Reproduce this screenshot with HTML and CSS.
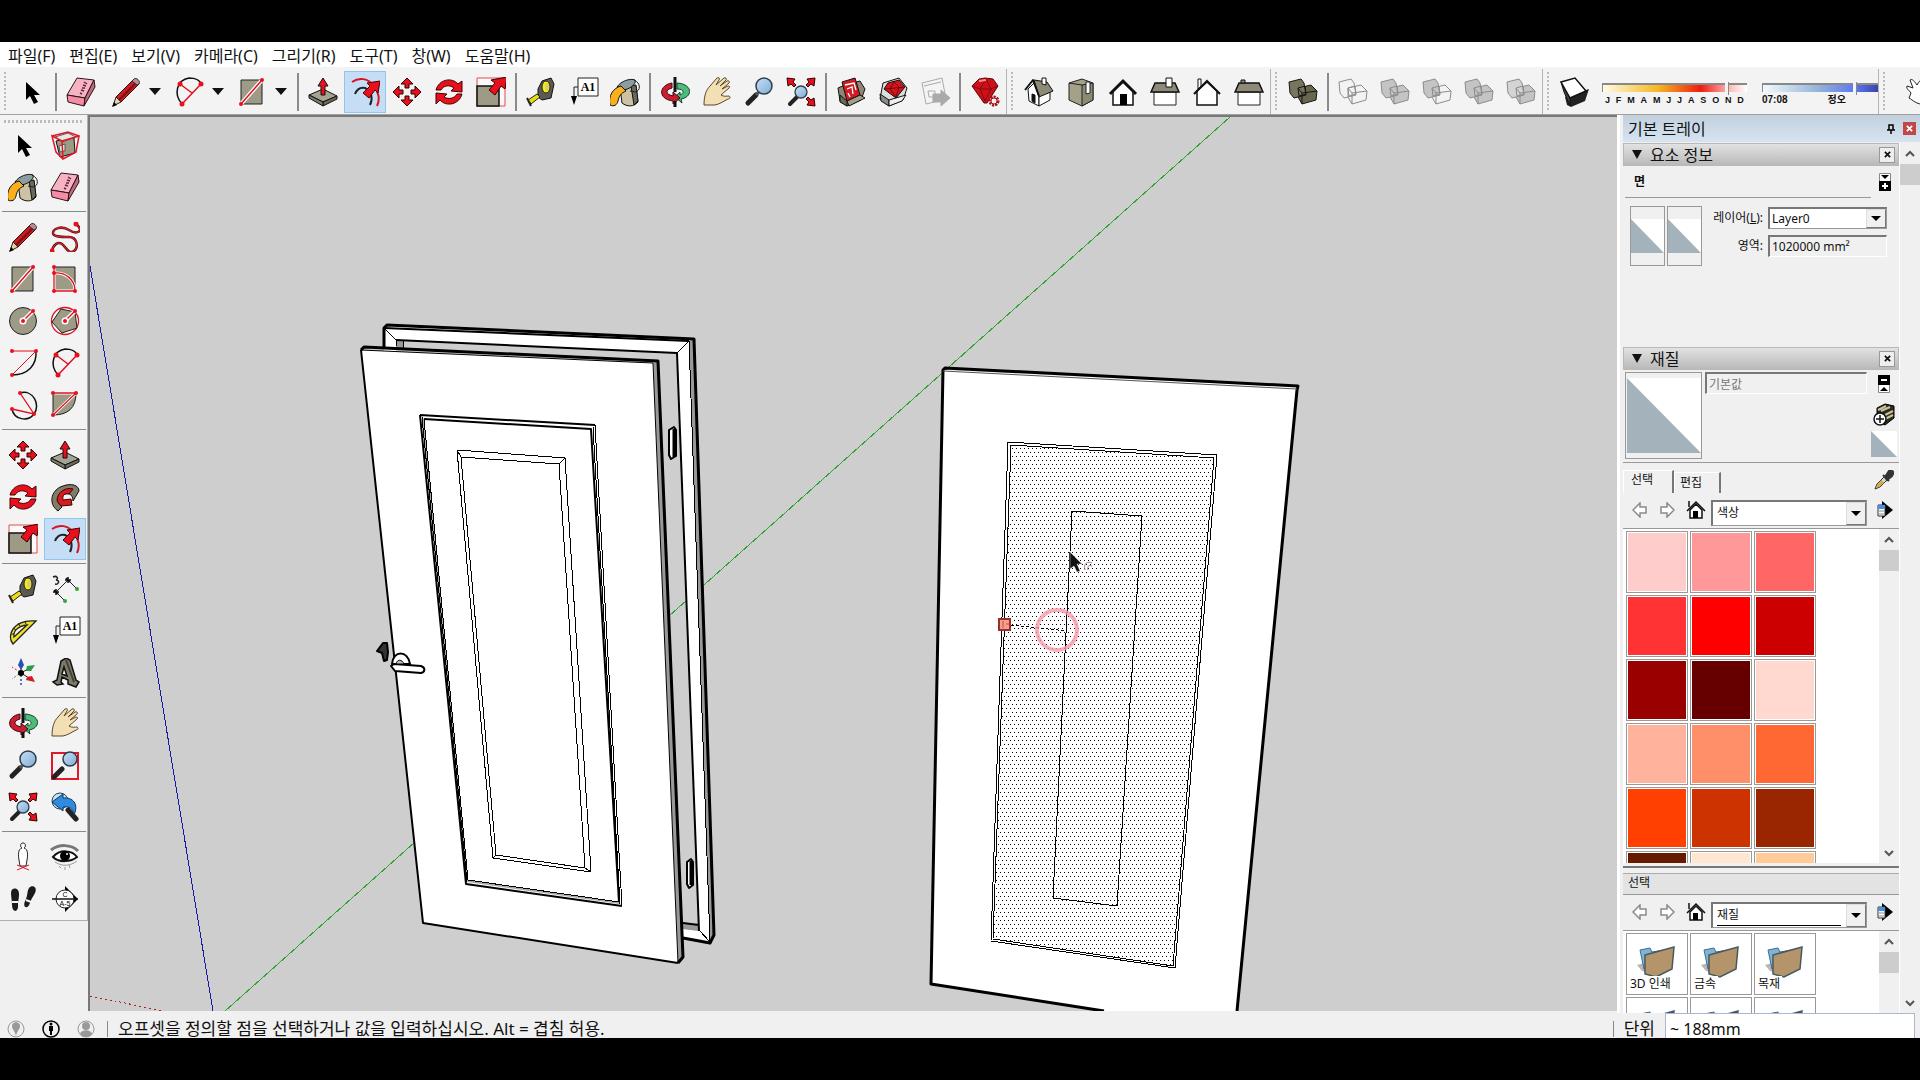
FILE: index.html
```html
<!DOCTYPE html>
<html lang="ko">
<head>
<meta charset="utf-8">
<title>모델링</title>
<link rel="stylesheet" href="styles.css">
</head>
<body>
<svg class="sprite" aria-hidden="true">
  <defs>
    <linearGradient id="lens" x1="0" y1="0" x2="1" y2="1"><stop offset="0" stop-color="#c9e0f5"/><stop offset="1" stop-color="#7fabd6"/></linearGradient>
    <pattern id="dots" width="4" height="8" patternUnits="userSpaceOnUse"><rect width="1" height="1" fill="#001"/><rect x="2" y="4" width="1" height="1" fill="#001"/></pattern>
  </defs>
  <symbol id="arrow" viewBox="-15 -15 30 30"><path d="M-5-10V8l4-4 4 8 4-2-4-7h6z"/></symbol>
  <symbol id="eraser" viewBox="-15 -15 30 30"><g stroke="#2b1418" stroke-width="1" stroke-linejoin="round"><path fill="#f7b3c4" d="M-4-14 13-12 4 6-14 3z"/><path fill="#f58da6" d="M-14 3 4 6 3 14-13 10z"/><path fill="#c26a80" d="M4 6 13-12 14-5 3 14z"/></g><path d="M3-10 6-8M2-7 5-6M1-4 4-4M0-2 3-1M-1 1 1 2" stroke="#5b2a36" stroke-width="1.500" fill="none"/></symbol>
  <symbol id="pencil" viewBox="-15 -15 30 30"><path fill="#c61c22" stroke="#3a0a0c" d="M-10 5 8-13l5 5L-5 10z"/><path stroke="#7d1014" stroke-width="2" d="M-7 8 11-10"/><path fill="#e9d2a6" stroke="#222" d="M-10 5-13 14-5 10z"/><path d="M-14 15l2-5 3 3z"/><path fill="#b98b92" stroke="#333" d="M8-13c2-2 7 2 5 5l-2 1-5-4z"/></symbol>
  <symbol id="arc2" viewBox="-15 -15 30 30"><path d="M-7 12C-16 2-12-12 0-14 8-14 11-11 12-8" fill="none" stroke="#111" stroke-width="1.500"/><path d="M-7 12 12-8M-9-8 3 1" stroke="#e01020" stroke-width="1.500"/><g fill="#e8101c"><circle cx="-7" cy="12" r="2.500"/><circle cx="12" cy="-8" r="2.500"/><circle cx="-9" cy="-8" r="2.500"/></g></symbol>
  <symbol id="rect" viewBox="-15 -15 30 30"><path fill="#9d9a86" stroke="#222" d="M-11-12H10V12H-11z"/><path d="M-11 12 10-12" stroke="#fff" stroke-width="4"/><path d="M-11 12 10-12" stroke="#e01020" stroke-width="1.500"/><circle cx="-11" cy="12" r="2" fill="#e8101c"/><circle cx="10" cy="-12" r="2" fill="#e8101c"/></symbol>
  <symbol id="rotrect" viewBox="-15 -15 30 30"><path fill="#9d9a86" stroke="#222" d="M-11-12H10V12H-11z"/><path d="M-11-12V12H10C10 0 0-7-11-6" fill="none" stroke="#fff" stroke-width="3"/><path d="M-11-12V12H10C10 0 0-7-11-6" fill="none" stroke="#e01020" stroke-width="1.300"/><g fill="#e8101c"><circle cx="-11" cy="-12" r="2"/><circle cx="-11" cy="-6" r="2"/><circle cx="-11" cy="12" r="2"/><circle cx="10" cy="12" r="2"/></g></symbol>
  <symbol id="circle" viewBox="-15 -15 30 30"><circle r="13.500" fill="#9d9a86" stroke="#222"/><path d="M0 0 10-10" stroke="#fff" stroke-width="4"/><path d="M0 0 10-10" stroke="#e01020" stroke-width="1.500"/><circle r="3.500" fill="#fff"/><circle r="2" fill="#e8101c"/><circle cx="10" cy="-10" r="2" fill="#e8101c"/></symbol>
  <symbol id="polygon" viewBox="-15 -15 30 30"><circle r="13.500" fill="#fff" stroke="#e01020" stroke-width="1.300"/><path fill="#9d9a86" stroke="#222" d="M-4-12 10-9 12 7-3 12-13 1z"/><path d="M0 0 10-10" stroke="#fff" stroke-width="4"/><path d="M0 0 10-10" stroke="#e01020" stroke-width="1.500"/><circle r="3.500" fill="#fff"/><circle r="2" fill="#e8101c"/><circle cx="10" cy="-10" r="2" fill="#e8101c"/></symbol>
  <symbol id="freehand" viewBox="-15 -15 30 30"><path d="M11-13C20-6 12-2 4-7S-12-8-12-4-4 0 4 0s10 10 5 14S1 10-3 7s-9 1-10 7" fill="none" stroke="#6f0c12" stroke-width="2.500"/><path d="M11-13C20-6 12-2 4-7S-12-8-12-4-4 0 4 0s10 10 5 14S1 10-3 7s-9 1-10 7" fill="none" stroke="#e03038" stroke-width="1"/><circle cx="11" cy="-13" r="2.500" fill="#e8101c"/><circle cx="-13" cy="14" r="2.500" fill="#e8101c"/></symbol>
  <symbol id="arc1" viewBox="-15 -15 30 30"><path d="M13-12C14 2 5 12-11 12" fill="none" stroke="#111" stroke-width="1.500"/><path d="M-11-12H13L-11 12" fill="none" stroke="#e01020"/><g fill="#e8101c"><circle cx="-11" cy="-12" r="2"/><circle cx="13" cy="-12" r="2"/><circle cx="-11" cy="12" r="2"/></g></symbol>
  <symbol id="arc3" viewBox="-15 -15 30 30"><path d="M-3-12C10-16 18 0 11 9 5 17-9 15-11 4" fill="none" stroke="#111" stroke-width="1.500"/><path d="M-3-12 11 9-11 4" fill="none" stroke="#e01020" stroke-width="1.300"/><g fill="#e8101c"><circle cx="-3" cy="-12" r="2"/><circle cx="11" cy="9" r="2"/><circle cx="-11" cy="4" r="2"/></g></symbol>
  <symbol id="pie" viewBox="-15 -15 30 30"><path fill="#9d9a86" stroke="#222" d="M-12-12H11C11 3 3 10-12 10z"/><path d="M-12-12H11L-12 10" fill="none" stroke="#fff" stroke-width="3"/><path d="M-12-12H11L-12 10" fill="none" stroke="#e01020" stroke-width="1.300"/><g fill="#e8101c"><circle cx="-12" cy="-12" r="2"/><circle cx="11" cy="-12" r="2"/><circle cx="-12" cy="10" r="2"/></g></symbol>
  <symbol id="pushpull" viewBox="-15 -15 30 30"><g stroke="#111" stroke-linejoin="round"><path fill="#a5a391" d="M0-3 14 4 0 10-14 3z"/><path fill="#6d6b5c" d="M14 4V7L0 14V10z"/><path fill="#7d7b6a" d="M-14 3V6L0 14V10z"/><path fill="#e8101c" d="M0-14 5-6H2V3H-2V-6H-5z"/></g></symbol>
  <symbol id="offset" viewBox="-15 -15 30 30"><path d="M-13-10C-6-15 3-14 9-6 14 0 15 8 12 14" fill="none" stroke="#d81420" stroke-width="2"/><path d="M-10 2C-8-3-5-5 0-4 7-1 8 7 5 13" fill="none" stroke="#222" stroke-width="2"/><path fill="#e8101c" stroke="#400" d="M15-11 13 1 10-2 4 6-2 1 5-6 2-9z"/></symbol>
  <symbol id="move" viewBox="-15 -15 30 30"><g fill="#e8101c" stroke="#300"><path d="M0-14 6-8H2V-4H-2V-8H-6z"/><path d="M0 14 6 8H2V4H-2V8H-6z"/><path d="M14 0 8-6V-2H4V2H8V6z"/><path d="M-14 0-8-6V-2H-4V2H-8V6z"/></g></symbol>
  <symbol id="rotate" viewBox="-15 -15 30 30"><g fill="#e8101c" stroke="#400"><path d="M-13-2C-10-13 3-15 9-8L13-11V0L2-1 5-4C0-8-6-6-8-2z"/><path d="M13 2C10 13-3 15-9 8L-13 12V1L-2 2-5 5C0 8 6 6 8 2z"/></g></symbol>
  <symbol id="scale" viewBox="-15 -15 30 30"><path d="M-14-14H14V14H-14z" fill="#fff8f8" stroke="#e04a54"/><path d="M-14-6H8V14H-14z" fill="#9d9a86" stroke="#111" stroke-width="1.500"/><path fill="#e8101c" stroke="#300" d="M16-15 14-3 10-6 4 3-2-2 4-9 0-12z"/></symbol>
  <symbol id="tape" viewBox="-15 -15 30 30"><path fill="#5c5a4e" stroke="#111" d="M-3-3 1-11 10-14 13-8 10 6 1 8-3 5z"/><ellipse cx="5" cy="-5" rx="4" ry="6" fill="#f5ea20" stroke="#222"/><ellipse cx="6" cy="-5" rx="2" ry="4" fill="#d9cf60"/><path fill="#e8dc10" stroke="#222" d="M-13 8-4 2-1 5-10 12z"/><path d="M-14 6-10 14" stroke="#222" stroke-width="2"/></symbol>
  <symbol id="bucket" viewBox="-15 -15 30 30"><g stroke="#111"><path fill="#cdc3a4" d="M-5-5 11-6 13 10C9 15 2 15-3 11z"/><path fill="#6b695c" d="M6-6 11-7 13 9 9 13z"/><path fill="#8b9da0" d="M-8-5C-4-11 5-14 10-12 12-8 4-2-3-2z"/><path fill="#f9b01c" d="M-4-6C-12-4-17 4-15 13-11 15-8 13-7 9-6 4-4 1 1-1z"/></g><path d="M9-12C16-9 16-1 10 0L5-1" fill="none" stroke="#222"/></symbol>
  <symbol id="orbit" viewBox="-15 -15 30 30"><path fill="#4dbb7c" stroke="#12462a" d="M2-9C18-8 18 5 6 7L7 11 0 5 5 0V3C10 1 9-3 2-3z"/><path fill="#c81e30" stroke="#3f0910" d="M-3-9C-16-7-18 7-2 9V12L5 6-2 0V4C-10 2-10-2-3-4z"/><path d="M0-15V0M0 9V15" stroke="#111" stroke-width="3"/></symbol>
  <symbol id="hand" viewBox="-15 -15 30 30"><path fill="#f3dfb4" stroke="#5a4626" stroke-linejoin="round" d="M-13 13C-13 4-11-2-7-6L0-14C2-15 3-14 2-12L-1-7 7-14C9-15 10-13 9-12L3-6 10-11C12-12 13-10 12-9L5-3 11-6C13-6 13-5 12-4L4 3C7 5 10 4 12 4 14 5 13 7 11 7 7 9 3 12-2 13z"/></symbol>
  <symbol id="zoom" viewBox="-15 -15 30 30"><path d="M-11 11-3 3" stroke="#222" stroke-width="5" stroke-linecap="round"/><path d="M-3 3 0 0" stroke="#555" stroke-width="3"/><circle cx="5" cy="-6" r="8" fill="url(#lens)" stroke="#2f3e4d" stroke-width="1.500"/></symbol>
  <symbol id="zoomwin" viewBox="-15 -15 30 30"><path d="M-13-12H13V14H-13z" fill="none" stroke="#e01828" stroke-width="2"/><path d="M-11 12-3 4" stroke="#222" stroke-width="5" stroke-linecap="round"/><circle cx="5" cy="-6" r="7" fill="url(#lens)" stroke="#2f3e4d" stroke-width="1.500"/></symbol>
  <symbol id="extents" viewBox="-15 -15 30 30"><path d="M-11 12-4 5" stroke="#222" stroke-width="4" stroke-linecap="round"/><circle cx="0" cy="0" r="6" fill="url(#lens)" stroke="#2f3e4d" stroke-width="1.300"/><g fill="#e8101c" stroke="#300"><path d="M-14-14-6-13-8-10-5-7-7-5-10-8-13-6z"/><path d="M14-14 6-13 8-10 5-7 7-5 10-8 13-6z"/><path d="M14 14 6 13 8 10 5 7 7 5 10 8 13 6z"/></g></symbol>
  <symbol id="previous" viewBox="-15 -15 30 30"><circle cx="-5" cy="-6" r="8" fill="#c7e0f2" stroke="#345"/><path d="M3 3 11 12" stroke="#222" stroke-width="5" stroke-linecap="round"/><path fill="#2f8be0" stroke="#0d3560" d="M-13-5-2-13V-9C8-10 14-3 9 8 8 1 4-1-2 0V4z"/></symbol>
  <symbol id="get3d" viewBox="-15 -15 30 30"><g stroke="#111" stroke-linejoin="round"><path fill="#8c8778" d="M-13-4-6-7 9-11 14-3 10 8-4 14-11 9z"/><path fill="#d01c22" d="M-9-10 4-14 9 3-4 9z"/><path fill="#6d6a5c" d="M-11 3-4 9V14L-11 10z"/><path fill="#a39e8c" d="M-4 9 9 3 14 6-2 14z"/></g><path d="M-6-7 3-9 5-2M-4-3 1-5 2 2M-3 1-1 5" stroke="#fff" stroke-width="1.300" fill="none"/></symbol>
  <symbol id="share3d" viewBox="-15 -15 30 30"><g stroke="#111" stroke-linejoin="round"><path fill="#ddd" d="M-10-9 6-14 14-4 10 8-4 14-13 7z"/><path fill="#8a8a88" d="M-13 2-4 8V14L-12 9z"/><path fill="#eee" d="M-4 8 13 3 9 9-4 14z"/><path fill="#d5141c" d="M-9-3-5-9 6-12 12-5 3 6z"/></g><path d="M-8-3 12-5M-3-3 3 5 6-5 1-10-3-3" stroke="#6d0a10" fill="none"/></symbol>
  <symbol id="sharecomp" viewBox="-15 -15 30 30"><g stroke="#aaa" fill="#f4f4f4"><path d="M-13-9 7-14 11 7-9 12z"/><path d="M-11-6 6-10M-7-1H0V5H-6z"/><path fill="#aaa" d="M-2 2H6V-2L15 6 6 14V10H-2z"/></g></symbol>
  <symbol id="gem" viewBox="-15 -15 30 30"><path fill="#cf1018" stroke="#5b060a" d="M-13-6-6-13 0-14 8-13 13-6 2 11H-1z"/><path d="M-13-6-5-3 6-3 13-6M-5-3 0 9 6-3 1-13-5-3" fill="none" stroke="#7e0a10"/><path d="M-6-11 1-12" stroke="#ff8a8a" stroke-width="2"/><circle cx="9" cy="9" r="4" fill="#f3f3f3" stroke="#a01018" stroke-width="3" stroke-dasharray="2 1"/><circle cx="9" cy="9" r="3" fill="#f3f3f3" stroke="#c01018"/></symbol>
  <symbol id="viso" viewBox="-15 -15 30 30"><g stroke="#111" stroke-linejoin="round"><path fill="#fff" d="M-11-3-5-9 0 4V14L-10 9z"/><path fill="#fff" d="M0 4 11 0V8L0 14z"/><path fill="#8d8a78" d="M-5-12 8-10 14-1 0 5z"/><path fill="none" stroke-width="2" d="M-14-2-6-12 0 4"/><path fill="#111" d="M-7 2-4 3V11L-7 9z"/><path fill="#fff" d="M3-14H7V-7L3-8z"/></g></symbol>
  <symbol id="vtop" viewBox="-15 -15 30 30"><g stroke="#222"><path fill="#a5a189" d="M-12-9 1-13 12-9V8L1 14-12 8z"/><path fill="#8d8a74" d="M1-7 12-9V8L1 14z"/><path fill="none" d="M-12-9 1-7"/><path fill="#fff" d="M5-10H9V1L5 2z"/></g></symbol>
  <symbol id="vfront" viewBox="-15 -15 30 30"><path fill="#fff" stroke="#111" stroke-width="1.500" d="M-10-1 0-10 10-1V13H-10z"/><path d="M-13 2 0-11 13 2" fill="none" stroke="#111" stroke-width="3"/><path d="M-3 13V2H4V13z"/></symbol>
  <symbol id="vright" viewBox="-15 -15 30 30"><path fill="#fff" stroke="#222" d="M-11 0H11V13H-11z"/><path fill="#8d8a78" stroke="#111" stroke-width="1.500" d="M-10-9H10L14 0H-14z"/><path fill="#fff" stroke="#111" d="M1-14H7V-5H1z"/></symbol>
  <symbol id="vback" viewBox="-15 -15 30 30"><path fill="#fff" stroke="#111" stroke-width="1.500" d="M-10-1 0-10 10-1V13H-10z"/><path d="M-13 2 0-11 13 2" fill="none" stroke="#111" stroke-width="2"/><path fill="#fff" stroke="#111" d="M-9-13H-6V-6L-9-3z"/></symbol>
  <symbol id="vleft" viewBox="-15 -15 30 30"><path fill="#fff" stroke="#222" d="M-11 0H11V13H-11z"/><path fill="#8d8a78" stroke="#111" stroke-width="1.500" d="M-10-9H10L14 0H-14z"/><path fill="#8d8a78" stroke="#111" d="M-8-12H-4V-9H-8z"/></symbol>
  <symbol id="solid" viewBox="-15 -15 30 30"><path class="s-back" d="M-5-4 8-7 14-1 13 8-1 12-5 5z"/><path class="s-front" d="M-14-10-2-13 1-9 3 3-9 6-13 1z"/><path class="s-in" d="M-5-4 2-6 3 2-4 4zM-5-4-1 1 14-1M-1 1V12"/></symbol>
  <symbol id="shadow" viewBox="-15 -15 30 30"><path fill="#222" d="M-10 5 5 0 14-3 10 9-4 15-8 13z"/><path d="M-14-10-11 0-5 14V6" fill="#444" stroke="#111"/><path fill="#fff" stroke="#111" stroke-width="1.500" d="M-14-10 0-14 11-1-5 6z"/></symbol>
  <symbol id="handout" viewBox="-15 -15 30 30"><path fill="#fff" stroke="#222" d="M15-10C9-14 8-10 6-7 4-10 1-14-1-12L2-4-4-6C-5-3-2-2 0 1L-2 6C2 8 4 12 15 13z"/></symbol>
  <symbol id="component" viewBox="-15 -15 30 30"><path fill="#9d9a86" stroke="#111" d="M-9-4 9-7 10 8-5 12z"/><path fill="#e8e8e0" stroke="#555" d="M-10-8 3-12 11-8-3-3zM-6 1 0-1V6L-5 7z"/><path d="M-13-9 3-13 14-9-3-4-13-9-9 7-2 14 11 7 14-9M-3-4-2 14" fill="none" stroke="#e01828" stroke-width="1.500"/></symbol>
  <symbol id="followme" viewBox="-15 -15 30 30"><path fill="#7f7c6a" stroke="#111" d="M-7 14C-18 6-13-8-2-11 6-14 14-12 14-6L8 4C8-3 3-5-2-2-7 1-8 6-3 10z"/><path fill="#d51a20" stroke="#400" d="M-8 4C-8-6 2-10 8-8L4-3C0-4-3-2-2 3L6 2 7 8-4 9z"/></symbol>
  <symbol id="dimension" viewBox="-15 -15 30 30"><path d="M-9 3 3-9M3-9 12 0M-9 3 0 12" stroke="#222" fill="none"/><path d="M-12 3H-6M-9 0V6M-11 1-7 5M0-9H6M3-12V-6M1-11 5-7" stroke="#111" stroke-width="1.500"/><path d="M-12-12C-8-14-6-10-9-9-5-9-6-4-10-5" fill="none" stroke="#222" stroke-width="1.500"/><circle cx="12" cy="0" r="2" fill="#2fa83a"/><circle cx="0" cy="12" r="2" fill="#2fa83a"/></symbol>
  <symbol id="protractor" viewBox="-15 -15 30 30"><path fill="#efe22a" fill-rule="evenodd" stroke="#222" stroke-width="1.300" d="M13-10-10 13C-17 5-10-12 13-10zM4-6C-5-5-10 0-9 6z"/><path d="M-12 3H-9M-10-3-7-1M-5-8-3-5M2-10 3-7" stroke="#222"/></symbol>
  <symbol id="axes" viewBox="-15 -15 30 30"><path d="M-2 0V-8M-2 0 5-4M-2 0 6 5" stroke="#222"/><path d="M-2 2V12" stroke="#2850b0" stroke-dasharray="2 2" stroke-width="1.500"/><path d="M-3-1-11-6" stroke="#d02030" stroke-dasharray="2 2"/><path d="M-4 1-11 6" stroke="#2f9a48" stroke-dasharray="2 2"/><path fill="#2850b0" d="M-2-15 1-8-2-3-5-8z"/><path fill="#2f9a48" d="M12-8 8-2 3-2 4-7z"/><path fill="#d01828" d="M12 9 3 7 4 4 9 3z"/><circle cx="-2" cy="0" r="3"/></symbol>
  <symbol id="text3d" viewBox="-15 -15 30 30"><path fill="#7d7a68" fill-rule="evenodd" stroke="#111" stroke-width="1.500" d="M-12 9-8 7-4-12 1-15 5-13 11 7 14 9 11 14 3 11 3 7-3 4-4 9-2 11-8 12zM-1-6-3 1 2 3z"/><path d="M1-13 9 9" stroke="#444236" stroke-width="2"/></symbol>
  <symbol id="person" viewBox="-15 -15 30 30"><path fill="#fff" stroke="#222" d="M0-14C-3-14-3-10-1-9-5-8-5-2-4 3L-3 9H3L4 3C5-2 5-8 1-9 3-10 3-14 0-14z"/><path d="M-6 8 6 13M6 8-6 13" stroke="#e01828"/></symbol>
  <symbol id="eye" viewBox="-15 -15 30 30"><path d="M-14-7C-6-13 6-13 13-6" fill="none" stroke="#777" stroke-width="3"/><path fill="#fff" stroke="#111" stroke-width="2" d="M-12 0C-5-8 7-7 12 0 6 5-6 6-12 0z"/><circle cy="-1" r="5"/><circle cx="2" cy="-3" r="1" fill="#fff"/><path d="M-10 5C-2 10 5 9 12 4M-6 9-4 11M0 10V13M4 8 5 11" fill="none" stroke="#999"/></symbol>
  <symbol id="feet" viewBox="-15 -15 30 30"><path d="M-12-6C-12-12-4-12-4-5-4 0-5 2-5 5-4 14-11 14-11 6-11 1-12-2-12-6zM3 0C5-5 4-8 6-11 9-15 15-12 12-6 10-2 8 0 7 4 5 11-2 9 3 0z" fill="#1b1b1b"/><path d="M-11 3H-5M3 1 8 3" stroke="#f3f3f3" stroke-width="2"/></symbol>
  <symbol id="home" viewBox="0 0 20 20"><path fill="#fff" stroke="#111" stroke-width="1.500" d="M4 10 10 4 16 10V18H4z"/><path d="M1 11 10 2 19 11M3 7V1" fill="none" stroke="#111" stroke-width="1.500"/><path d="M7 18V11H12V18z"/></symbol>
  <symbol id="back" viewBox="0 0 16 16"><path fill="#fff" stroke="#8a8a8a" stroke-width="1.500" d="M1 8 8 1V5H14V11H8V15z"/></symbol>
  <symbol id="fwd" viewBox="0 0 16 16"><path fill="#fff" stroke="#8a8a8a" stroke-width="1.500" d="M15 8 8 1V5H2V11H8V15z"/></symbol>
  <symbol id="details" viewBox="0 0 18 18"><path d="M6 0 17 9 6 18z"/><path fill="#fff" stroke="#333" d="M2 4H9V15H2z"/><path fill="#4a90d9" d="M2 4H9V8H2z"/><path d="M3 10H8M3 13H8" stroke="#888"/></symbol>
  <symbol id="up" viewBox="0 0 10 8"><path d="M1 6 5 2 9 6" fill="none" stroke="#555" stroke-width="2"/></symbol>
  <symbol id="down" viewBox="0 0 10 8"><path d="M1 2 5 6 9 2" fill="none" stroke="#555" stroke-width="2"/></symbol>
  <symbol id="cross" viewBox="0 0 8 8"><path d="M1 1 7 7M7 1 1 7" stroke="currentColor" stroke-width="2"/></symbol>
  <symbol id="folder" viewBox="0 0 40 36"><path fill="#999" opacity=".7" d="M1 20 8 18 12 28 6 26z"/><path fill="#7db4da" stroke="#456b85" d="M4 5 14 3 16 7 28 5 18 30 8 24z"/><path fill="#b3946b" stroke="#4a5960" stroke-width="1.500" d="M9 10 38 2 36 24 20 32 9 29z"/></symbol>
</svg>

<div class="app">
  <nav class="menubar">
    <a href="#">파일(F)</a><a href="#">편집(E)</a><a href="#">보기(V)</a><a href="#">카메라(C)</a><a href="#">그리기(R)</a><a href="#">도구(T)</a><a href="#">창(W)</a><a href="#">도움말(H)</a>
  </nav>

  <div class="toolbar">
    <div class="group first">
      <button class="tool" aria-label="선택"><svg><use href="#arrow"/></svg></button>
      <i class="sep"></i>
      <button class="tool" aria-label="지우개"><svg><use href="#eraser"/></svg></button>
      <div class="splits">
        <div class="split"><button class="tool" aria-label="선"><svg><use href="#pencil"/></svg></button><button class="caret" aria-label="선 도구 더 보기"></button></div>
        <div class="split"><button class="tool" aria-label="호"><svg><use href="#arc2"/></svg></button><button class="caret" aria-label="호 도구 더 보기"></button></div>
        <div class="split"><button class="tool" aria-label="직사각형"><svg><use href="#rect"/></svg></button><button class="caret" aria-label="도형 도구 더 보기"></button></div>
      </div>
      <i class="sep"></i>
      <button class="tool" aria-label="밀기/끌기"><svg><use href="#pushpull"/></svg></button>
      <button class="tool active" aria-label="오프셋"><svg><use href="#offset"/></svg></button>
      <button class="tool" aria-label="이동"><svg><use href="#move"/></svg></button>
      <button class="tool" aria-label="회전"><svg><use href="#rotate"/></svg></button>
      <button class="tool" aria-label="배율"><svg><use href="#scale"/></svg></button>
      <i class="sep"></i>
      <button class="tool" aria-label="줄자"><svg><use href="#tape"/></svg></button>
      <button class="tool" aria-label="텍스트"><svg viewBox="-15 -15 30 30"><path fill="#fff" stroke="#222" d="M-5-14H15V4H-5z"/><path d="M-5-5H-9V4" fill="none" stroke="#222"/><path d="M-12 4H-6L-9 13z"/><text class="glyph-a1" x="5" y="-1">A1</text></svg></button>
      <button class="tool" aria-label="페인트통"><svg><use href="#bucket"/></svg></button>
      <i class="sep"></i>
      <button class="tool" aria-label="궤도"><svg><use href="#orbit"/></svg></button>
      <button class="tool" aria-label="시점 이동"><svg><use href="#hand"/></svg></button>
      <button class="tool" aria-label="확대/축소"><svg><use href="#zoom"/></svg></button>
      <button class="tool" aria-label="범위 확대"><svg><use href="#extents"/></svg></button>
      <i class="sep"></i>
      <button class="tool" aria-label="모델 가져오기"><svg><use href="#get3d"/></svg></button>
      <button class="tool" aria-label="모델 공유"><svg><use href="#share3d"/></svg></button>
      <button class="tool" aria-label="구성요소 공유"><svg><use href="#sharecomp"/></svg></button>
      <i class="sep"></i>
      <button class="tool" aria-label="확장 프로그램"><svg><use href="#gem"/></svg></button>
    </div>
    <div class="group">
      <button class="tool" aria-label="등각"><svg><use href="#viso"/></svg></button>
      <button class="tool" aria-label="위"><svg><use href="#vtop"/></svg></button>
      <button class="tool" aria-label="앞"><svg><use href="#vfront"/></svg></button>
      <button class="tool" aria-label="오른쪽"><svg><use href="#vright"/></svg></button>
      <button class="tool" aria-label="뒤"><svg><use href="#vback"/></svg></button>
      <button class="tool" aria-label="왼쪽"><svg><use href="#vleft"/></svg></button>
    </div>
    <div class="group">
      <button class="tool solid-dark" aria-label="외부 셸"><svg><use href="#solid"/></svg></button>
      <i class="sep"></i>
      <button class="tool solid-line" aria-label="교차"><svg><use href="#solid"/></svg></button>
      <button class="tool" aria-label="결합"><svg><use href="#solid"/></svg></button>
      <button class="tool solid-sub" aria-label="빼기"><svg><use href="#solid"/></svg></button>
      <button class="tool" aria-label="트림"><svg><use href="#solid"/></svg></button>
      <button class="tool solid-split" aria-label="분할"><svg><use href="#solid"/></svg></button>
    </div>
    <div class="group shadows">
      <button class="tool" aria-label="그림자"><svg><use href="#shadow"/></svg></button>
      <div class="slider months">
        <input type="range" min="0" max="100" value="87" aria-label="날짜">
        <div class="ticks"><span>J</span><span>F</span><span>M</span><span>A</span><span>M</span><span>J</span><span>J</span><span>A</span><span>S</span><span>O</span><span>N</span><span>D</span></div>
      </div>
      <div class="slider hours">
        <input type="range" min="0" max="100" value="81" aria-label="시간">
        <div class="ticks"><span>07:08</span><span>정오</span></div>
      </div>
    </div>
    <div class="group last">
      <button class="tool" aria-label="상호 작용"><svg><use href="#handout"/></svg></button>
    </div>
  </div>

  <div class="workspace">
    <aside class="tools">
      <div class="palette">
        <div class="handle"></div>
        <div class="pair">
          <button class="tool" aria-label="선택"><svg><use href="#arrow"/></svg></button>
          <button class="tool" aria-label="구성요소 만들기"><svg><use href="#component"/></svg></button>
          <button class="tool" aria-label="페인트통"><svg><use href="#bucket"/></svg></button>
          <button class="tool" aria-label="지우개"><svg><use href="#eraser"/></svg></button>
        </div>
        <div class="pair">
          <button class="tool" aria-label="선"><svg><use href="#pencil"/></svg></button>
          <button class="tool" aria-label="프리핸드"><svg><use href="#freehand"/></svg></button>
          <button class="tool" aria-label="직사각형"><svg><use href="#rect"/></svg></button>
          <button class="tool" aria-label="회전된 직사각형"><svg><use href="#rotrect"/></svg></button>
          <button class="tool" aria-label="원"><svg><use href="#circle"/></svg></button>
          <button class="tool" aria-label="다각형"><svg><use href="#polygon"/></svg></button>
          <button class="tool" aria-label="호"><svg><use href="#arc1"/></svg></button>
          <button class="tool" aria-label="두 점 호"><svg><use href="#arc2"/></svg></button>
          <button class="tool" aria-label="세 점 호"><svg><use href="#arc3"/></svg></button>
          <button class="tool" aria-label="파이"><svg><use href="#pie"/></svg></button>
        </div>
        <div class="pair">
          <button class="tool" aria-label="이동"><svg><use href="#move"/></svg></button>
          <button class="tool" aria-label="밀기/끌기"><svg><use href="#pushpull"/></svg></button>
          <button class="tool" aria-label="회전"><svg><use href="#rotate"/></svg></button>
          <button class="tool" aria-label="따라가기"><svg><use href="#followme"/></svg></button>
          <button class="tool" aria-label="배율"><svg><use href="#scale"/></svg></button>
          <button class="tool active" aria-label="오프셋"><svg><use href="#offset"/></svg></button>
        </div>
        <div class="pair">
          <button class="tool" aria-label="줄자"><svg><use href="#tape"/></svg></button>
          <button class="tool" aria-label="치수"><svg><use href="#dimension"/></svg></button>
          <button class="tool" aria-label="각도기"><svg><use href="#protractor"/></svg></button>
          <button class="tool" aria-label="텍스트"><svg viewBox="-15 -15 30 30"><path fill="#fff" stroke="#222" d="M-5-14H15V4H-5z"/><path d="M-5-5H-9V4" fill="none" stroke="#222"/><path d="M-12 4H-6L-9 13z"/><text class="glyph-a1" x="5" y="-1">A1</text></svg></button>
          <button class="tool" aria-label="축"><svg><use href="#axes"/></svg></button>
          <button class="tool" aria-label="3D 텍스트"><svg><use href="#text3d"/></svg></button>
        </div>
        <div class="pair">
          <button class="tool" aria-label="궤도"><svg><use href="#orbit"/></svg></button>
          <button class="tool" aria-label="시점 이동"><svg><use href="#hand"/></svg></button>
          <button class="tool" aria-label="확대/축소"><svg><use href="#zoom"/></svg></button>
          <button class="tool" aria-label="창 확대"><svg><use href="#zoomwin"/></svg></button>
          <button class="tool" aria-label="범위 확대"><svg><use href="#extents"/></svg></button>
          <button class="tool" aria-label="이전"><svg><use href="#previous"/></svg></button>
        </div>
        <div class="pair">
          <button class="tool" aria-label="카메라 배치"><svg><use href="#person"/></svg></button>
          <button class="tool" aria-label="둘러보기"><svg><use href="#eye"/></svg></button>
          <button class="tool" aria-label="걷기"><svg><use href="#feet"/></svg></button>
          <button class="tool" aria-label="단면"><svg viewBox="-15 -15 30 30"><path d="M0-13 13 0 0 13z"/><circle r="9" fill="#fff" stroke="#222"/><path d="M-13 0H13" stroke="#111" stroke-width="1.500"/><text class="glyph-sec" x="0" y="-2">C</text><text class="glyph-sec" x="0" y="7">A-5</text></svg></button>
        </div>
      </div>
    </aside>

    <main class="viewport">
      <svg class="scene" viewBox="90 117 1527 894" preserveAspectRatio="xMinYMin slice" role="img" aria-label="문 모델">
        <g shape-rendering="crispEdges" fill="none">
          <path d="M1230 117 225 1011" stroke="#2fa52f"/>
          <path d="M90 266 213 1011" stroke="#1a1aa0"/>
          <path d="M90 996 164 1011" stroke="#b02020" stroke-dasharray="2 3"/>
        </g>
        <g stroke="#000" stroke-linejoin="round">
          <!-- frame of the finished door -->
          <path fill="#fff" stroke="none" fill-rule="evenodd" d="M384 328 387 325 694 339 714 935 710 943 683 938 384 500zM396 340 677 353 699 931 683 929 396 500z"/>
          <path fill="#999" stroke="none" d="M689 341 694 339 714 935 710 942zM396 340H403V348H396zM683 923 699 925V931L683 929z"/>
          <path fill="none" stroke-width="3" d="M384 347 384 328 387 325 694 339 714 935 710 943 683 938"/>
          <path fill="none" stroke-width="2" d="M384 328 689 341M396 340 677 353 699 931M683 923 699 925"/>
          <path fill="none" shape-rendering="crispEdges" d="M385 329 396 340V346M403 341V348M689 341 677 353M689 341 710 942M710 942 699 930"/>
          <!-- door leaf -->
          <path fill="#999" stroke="none" d="M653 363 658 361 683 957 678 963z"/>
          <path fill="#fff" stroke="none" d="M361 350 653 363 678 963 423 923z"/>
          <path fill="none" stroke-width="3" d="M361 350 364 347 658 361 683 957 678 963"/>
          <path fill="none" stroke-width="2" d="M678 963 423 923 361 350"/>
          <path fill="none" stroke-width="1" d="M361 350 653 363 678 963"/>
          <path fill="#aaa" stroke="none" d="M422 417 424 419 468 880 619 902 620 904 467 882z"/>
          <path fill="none" stroke-width="2" d="M424 419 591 429 619 902M420 415 595 425M420 415 466 884 622 906"/>
          <path fill="none" shape-rendering="crispEdges" d="M595 425 622 906M424 419 468 880 619 902M593 427 620 904M422 417 467 882"/>
          <path fill="none" shape-rendering="crispEdges" d="M457 450 565 458 591 872 493 858zM461 457 559 464 585 868 496 855zM457 450 461 457M565 458 559 464M591 872 585 868M493 858 496 855"/>
          <!-- hinges and handle -->
          <path fill="#fff" stroke-width="2" d="M669 430 674 427 676 430V456L671 459 669 455zM687 862 691 859 693 862V885L689 888 687 884z"/>
          <path fill="none" stroke-width="3" d="M674 429V457M691 861V885"/>
          <path fill="#333" stroke-width="2" d="M377 651 383 643 387 643 388 652 387 660 384 661 382 653z"/>
          <path fill="#fff" stroke-width="2" d="M392 664C393 650 408 650 410 664zM391 666 394 664 421 666C426 668 425 672 421 673L395 671z"/>
          <path fill="#bbb" d="M396 664C397 659 402 659 404 664z"/>
          <!-- door being drawn -->
          <path fill="#fff" stroke="none" d="M943 370 1298 387 1237 1011H1104L931 984z"/>
          <path fill="none" stroke-width="3" d="M1104 1011 931 984 943 370 945 368 1298 386 1297 390 1237 1011"/>
          <path fill="none" d="M943 371 1297 389" stroke="#555"/>
          <g shape-rendering="crispEdges">
            <path fill="none" d="M1008 442 1217 455 1175 968 991 941z"/>
            <path fill="url(#dots)" d="M1011 445 1214 458 1173 966 993 939z"/>
            <path fill="none" d="M1072 511 1142 516 1117 906 1053 898z"/>
            <path fill="none" stroke-dasharray="3 2" d="M1011 625 1067 631"/>
          </g>
        </g>
        <circle cx="1057" cy="630" r="20" fill="none" stroke="#f798a8" stroke-opacity=".8" stroke-width="4"/>
        <path fill="#f3a090" stroke="#993028" stroke-width="2" d="M999 619H1010V630H999z"/>
        <path d="M1003 621V628M1006 624H1009" stroke="#c05040"/>
        <path d="M1070 552V569L1074 566 1077 572 1080 571 1077 564H1082z" fill="#111" stroke="#ddd" stroke-width=".5"/>
        <path d="M1085 570C1083 563 1088 561 1092 563M1088 570C1087 566 1089 565 1092 566" fill="none" stroke="#987888"/>
      </svg>
    </main>

    <aside class="tray">
      <header class="tray-title"><span>기본 트레이</span>
        <button class="pin" aria-label="고정"><svg viewBox="0 0 8 10"><path d="M2 1H6V6H2zM0 6H8M4 6V10" fill="none" stroke="#000" stroke-width="1.500"/></svg></button>
        <button class="close-tray" aria-label="트레이 닫기"><svg><use href="#cross"/></svg></button>
      </header>
      <div class="tray-body">
        <div class="panels">
          <h2 class="panel-head"><i class="open"></i><span>요소 정보</span><button class="close" aria-label="요소 정보 닫기"><svg><use href="#cross"/></svg></button></h2>
          <section class="entity">
            <div class="entity-name"><span>면</span><button class="mini" aria-label="세부 정보"><svg viewBox="0 0 12 18"><path fill="#fff" stroke="#888" d="M.5.500H11.500V17.500H.5z"/><path d="M2 2H10L6 6zM0 8H12V18H0z"/><path d="M3 13H9M6 10V16" stroke="#fff" stroke-width="2"/></svg></button></div>
            <div class="entity-row">
              <div class="faces"><div class="face"><svg viewBox="0 0 33 34" preserveAspectRatio="none"><path fill="#fff" d="M0 0H33V34H0z"/><path fill="#a4b2bb" d="M0 0 33 34H0z"/></svg></div><div class="face"><svg viewBox="0 0 33 34" preserveAspectRatio="none"><path fill="#fff" d="M0 0H33V34H0z"/><path fill="#a4b2bb" d="M0 0 33 34H0z"/></svg></div></div>
              <div class="fields">
                <label for="layer">레이어(<u>L</u>):</label><div class="combo"><select id="layer"><option>Layer0</option></select><i></i></div>
                <label for="area">영역:</label><input class="sunk" id="area" value="1020000 mm²" readonly>
              </div>
            </div>
          </section>
          <h2 class="panel-head"><i class="open"></i><span>재질</span><button class="close" aria-label="재질 닫기"><svg><use href="#cross"/></svg></button></h2>
          <section class="material">
            <div class="preview"><svg viewBox="0 0 74 74" preserveAspectRatio="none"><path fill="#fff" d="M0 0H75V75H0z"/><path fill="#a4b2bb" d="M0 0 74 74H0z"/></svg></div>
            <input class="sunk pale" value="기본값" aria-label="재질 이름" readonly>
            <div class="material-side">
              <button class="mini" aria-label="보조 창"><svg viewBox="0 0 12 18"><path fill="#fff" stroke="#888" d="M.5.500H11.500V17.500H.5z"/><path d="M0 0H12V10H0zM2 16H10L6 12z"/><path d="M3 5H9" stroke="#fff" stroke-width="2"/></svg></button>
              <button class="create" aria-label="재질 만들기"><svg viewBox="0 0 22 23"><path fill="#2c2a20" stroke="#000" d="M4 5 12 1 21 3V15L12 22 4 18z"/><path d="M5 7 13 3M8 8 17 4M12 12 20 8M12 16 20 12" stroke="#c9c39a" stroke-width="2"/><circle cx="7" cy="16" r="6" fill="#fff" stroke="#111" stroke-width="1.500"/><path d="M3 16H11M7 12V20" stroke="#111" stroke-width="1.500"/></svg></button>
              <button class="swap" aria-label="기본 재질"><svg viewBox="0 0 26 26"><path fill="#fff" d="M0 0H26V26H0z"/><path fill="#a4b2bb" d="M0 0 26 26H0z"/></svg></button>
            </div>
          </section>
          <div class="tabs"><button class="tab on">선택</button><button class="tab">편집</button>
            <button class="dropper" aria-label="재질 추출"><svg viewBox="0 0 20 20"><path d="M1 19 3 14 11 6 14 9 6 17z" fill="#cfd6dc" stroke="#333"/><path d="M2 18 4 14 8 10 10 13 6 16z" fill="#d8a83a"/><path d="M9 5 15 11M11 7 15 1C20 0 20 3 18 6L13 10z" fill="#333" stroke="#333" stroke-width="2"/></svg></button></div>
          <div class="nav">
            <button aria-label="뒤로"><svg class="i16"><use href="#back"/></svg></button><button aria-label="앞으로"><svg class="i16"><use href="#fwd"/></svg></button><button aria-label="모델 내"><svg class="i20"><use href="#home"/></svg></button>
            <div class="combo big"><select aria-label="재질 모음"><option>색상</option></select><i></i></div>
            <button aria-label="상세 정보"><svg class="i18"><use href="#details"/></svg></button>
          </div>
          <div class="listing colors">
            <div class="grid">
              <button class="swatch c1" aria-label="색상 1"></button><button class="swatch c2" aria-label="색상 2"></button><button class="swatch c3" aria-label="색상 3"></button>
              <button class="swatch c4" aria-label="색상 4"></button><button class="swatch c5" aria-label="색상 5"></button><button class="swatch c6" aria-label="색상 6"></button>
              <button class="swatch c7" aria-label="색상 7"></button><button class="swatch c8" aria-label="색상 8"></button><button class="swatch c9" aria-label="색상 9"></button>
              <button class="swatch c10" aria-label="색상 10"></button><button class="swatch c11" aria-label="색상 11"></button><button class="swatch c12" aria-label="색상 12"></button>
              <button class="swatch c13" aria-label="색상 13"></button><button class="swatch c14" aria-label="색상 14"></button><button class="swatch c15" aria-label="색상 15"></button>
              <button class="swatch c16" aria-label="색상 16"></button><button class="swatch c17" aria-label="색상 17"></button><button class="swatch c18" aria-label="색상 18"></button>
            </div>
            <div class="scroll"><button aria-label="위로"><svg><use href="#up"/></svg></button><i></i><button class="end" aria-label="아래로"><svg><use href="#down"/></svg></button></div>
          </div>
          <div class="splitter"></div>
          <h3 class="second-head">선택</h3>
          <div class="nav second">
            <button aria-label="뒤로"><svg class="i16"><use href="#back"/></svg></button><button aria-label="앞으로"><svg class="i16"><use href="#fwd"/></svg></button><button aria-label="모델 내"><svg class="i20"><use href="#home"/></svg></button>
            <div class="combo big lined"><select aria-label="폴더"><option>재질</option></select><i></i></div>
            <button aria-label="상세 정보"><svg class="i18"><use href="#details"/></svg></button>
          </div>
          <div class="listing folders">
            <div class="grid">
              <button class="folder"><svg><use href="#folder"/></svg><span>3D 인쇄</span></button><button class="folder"><svg><use href="#folder"/></svg><span>금속</span></button><button class="folder"><svg><use href="#folder"/></svg><span>목재</span></button>
              <button class="folder" aria-label="폴더 4"><svg><use href="#folder"/></svg></button><button class="folder" aria-label="폴더 5"><svg><use href="#folder"/></svg></button><button class="folder" aria-label="폴더 6"><svg><use href="#folder"/></svg></button>
            </div>
            <div class="scroll"><button aria-label="위로"><svg><use href="#up"/></svg></button><i></i></div>
          </div>
        </div>
        <div class="scroll outer"><button aria-label="위로"><svg><use href="#up"/></svg></button><i></i><button class="end" aria-label="아래로"><svg><use href="#down"/></svg></button></div>
      </div>
    </aside>
  </div>

  <footer class="status">
    <div class="status-icons">
      <button aria-label="위치"><svg viewBox="0 0 18 20"><circle cx="9" cy="10" r="8" fill="none" stroke="#999"/><path d="M9 17C8 12 5 10 5 7 5 2 13 2 13 7 13 10 10 12 9 17z" fill="#999"/></svg></button>
      <button aria-label="제작자"><svg viewBox="0 0 18 20"><circle cx="9" cy="10" r="8" fill="none" stroke="#000" stroke-width="1.500"/><circle cx="9" cy="5" r="1.500"/><path d="M7 7H11V12H10V16H8V12H7z"/></svg></button>
      <button aria-label="로그인"><svg viewBox="0 0 18 20"><circle cx="9" cy="10" r="8" fill="none" stroke="#999"/><circle cx="9" cy="7" r="4" fill="#999"/><path d="M3 15C4 10 14 10 15 15 12 19 6 19 3 15z" fill="#999"/></svg></button>
    </div>
    <i class="bar"></i>
    <p>오프셋을 정의할 점을 선택하거나 값을 입력하십시오. Alt = 겹침 허용.</p>
    <div class="measure"><i class="bar"></i><label for="vcb">단위</label><input id="vcb" value="~ 188mm"></div>
  </footer>
</div>
</body>
</html>
```
FILE: styles.css
```css
* { box-sizing: border-box; }
html, body { height: 100%; }
body {
  margin: 0;
  padding: 42px 0;
  background: #000;
  color: #111;
  font-family: "Noto Sans", "Noto Sans CJK KR", sans-serif;
  font-size: 16px;
  line-height: 20px;
  overflow: hidden;
}
button, input, select { font: inherit; color: inherit; margin: 0; border-radius: 0; }
button { padding: 0; border: 0; background: none; }
button, select { display: block; }
svg { display: block; }
.sprite { position: absolute; width: 0; height: 0; }
.glyph-a1 { font: bold 12px "Liberation Serif", serif; text-anchor: middle; }
.glyph-sec { font: 7px "Liberation Sans", sans-serif; text-anchor: middle; }

.app { height: 100%; display: flex; flex-direction: column; background: #f0f0f0; }

/* menu and tool bars */
.menubar { flex: none; height: 25px; display: flex; gap: 14px; padding: 4px 8px 0; background: #fff; }
.menubar a { color: #111; text-decoration: none; white-space: nowrap; }

.toolbar { flex: none; height: 48px; display: flex; padding-top: 2px; background: #f3f3f3; border-bottom: 1px solid #a0a0a0; overflow: hidden; }
.group { flex: none; display: flex; align-items: center; padding-left: 4px; border-right: 1px solid #b4b4b4; }
.group::before { content: ""; width: 2px; height: 40px; margin-right: 5px; background: repeating-linear-gradient(#bbb 0 2px, transparent 2px 4px); }
.group.last { border-right: 0; flex: 1; }
.group.first::before { margin-right: 4px; }
.tool { flex: none; width: 42px; height: 42px; display: grid; place-items: center; border: 1px solid transparent; }
.tool svg { width: 30px; height: 30px; overflow: visible; }
.tool.active { background: #c5def5; border-color: #92c4ee; }
.sep { flex: none; width: 2px; height: 38px; margin: 0 3px; background: #8a8a8a; }
.splits { display: flex; margin-left: 3px; }
.split { display: flex; align-items: center; width: 63px; }
.caret { width: 21px; height: 42px; }
.caret::before { content: ""; display: block; width: 0; margin-left: 2px; border: 6px solid transparent; border-top: 7px solid #111; border-bottom: 0; }
.s-back { fill: var(--back, #c4c4c4); stroke: var(--edge, #8c8c8c); }
.s-front { fill: var(--front, #c4c4c4); stroke: var(--edge, #8c8c8c); }
.s-in { fill: none; stroke: var(--edge, #8c8c8c); }
.solid-dark { --back: #68664f; --front: #77745f; --edge: #17170f; }
.solid-line { --back: none; --front: none; }
.solid-sub { --back: #f3f3f3; }
.solid-split { --front: #d4d4d4; }

.slider { padding-top: 3px; }
.months { width: 145px; margin-left: 6px; }
.hours { width: 116px; margin-left: 15px; }
.slider input { display: block; width: 100%; height: 13px; appearance: none; background: none; }
.slider input::-webkit-slider-runnable-track { height: 9px; border-top: 2px solid #888; border-left: 1px solid #888; }
.months input::-webkit-slider-runnable-track { background: linear-gradient(90deg, #fffbe6, #f5b820 38%, #f01c10 68%, #fbb 88%, #fff); }
.hours input::-webkit-slider-runnable-track { background: linear-gradient(90deg, #f4fafc, #8fb0d8 50%, #5a78f8 80%, #3a44a8); }
.slider input::-webkit-slider-thumb { appearance: none; width: 4px; height: 13px; margin-top: -3px; background: #f3f3f3; border-right: 1px solid #888; }
.ticks { display: flex; justify-content: space-between; padding: 0 3px; font: bold 9px/12px "Liberation Sans", "Noto Sans CJK KR", sans-serif; }
.hours .ticks { padding: 0 32px 0 0; font-size: 10px; }

.workspace { flex: 1; min-height: 0; display: flex; }
.tools { flex: none; width: 88px; }
.palette { padding: 5px 1px 0 2px; border-right: 1px solid #b0b0b0; border-bottom: 1px solid #b0b0b0; background: #f3f3f3; }
.handle { height: 3px; margin: 0 2px 1px; background: repeating-linear-gradient(90deg, #bbb 0 2px, transparent 2px 4px); }
.pair { display: grid; grid-template-columns: 42px 42px; }
.pair + .pair { margin-top: 3px; padding-top: 4px; border-top: 1px solid #8a8a8a; }

.viewport { flex: 1; min-width: 0; margin-bottom: 2px; background: #cecece; border: solid #787878; border-width: 2px 0 0 2px; }
.scene { width: 100%; height: 100%; }

/* tray */
.tray { flex: none; width: 303px; padding-left: 3px; display: flex; flex-direction: column; border-left: 3px solid #fff; }
.tray-title { flex: none; height: 27px; display: flex; align-items: center; padding: 0 4px 0 5px; background: linear-gradient(#c2d0de, #d6e4f2); }
.tray-title span { flex: 1; }
.pin { width: 8px; height: 10px; margin-right: 8px; }
.close-tray { width: 13px; height: 13px; display: grid; place-items: center; background: #c04848; color: #fff; }
.close-tray svg { width: 7px; height: 7px; }
.tray-body { flex: 1; min-height: 0; display: flex; padding-top: 1px; }
.panels { flex: 1; min-width: 0; display: flex; flex-direction: column; font-size: 12px; line-height: 16px; border-right: 1px solid #fff; }
.panel-head { flex: none; height: 23px; margin: 0; display: flex; align-items: center; padding: 0 3px 0 8px; border: 1px solid #b8b8b8; background: linear-gradient(#e2e2e2, #b9b9b9); font-weight: 400; font-size: 16px; line-height: 20px; }
.panel-head span { flex: 1; }
.open { margin-right: 8px; border: 5px solid transparent; border-top: 9px solid #111; border-bottom: 0; }
.close { width: 16px; height: 16px; display: grid; place-items: center; border: 1px solid #999; background: #eee; }
.close svg { width: 7px; height: 7px; }

.entity { flex: none; height: 181px; padding: 2px 8px 0 2px; }
.entity-name { display: flex; justify-content: space-between; align-items: center; height: 28px; padding-left: 9px; font-weight: 700; }
.mini svg { width: 12px; height: 18px; }
.entity-row { display: flex; margin-top: 1px; padding: 9px 4px 0 5px; position: relative; }
.entity-row::before { content: ""; position: absolute; top: 0; left: 0; width: 246px; height: 1px; background: #999; }
.faces { display: flex; gap: 2px; }
.face { width: 35px; height: 60px; padding: 12px 0 13px; border: 1px solid #999; }
.face svg { width: 33px; height: 34px; }
.fields { flex: 1; display: grid; grid-template-columns: 1fr 119px; grid-auto-rows: 22px; gap: 6px 5px; align-items: center; padding-top: 1px; text-align: right; white-space: nowrap; }
.combo { position: relative; height: 22px; border: 1px solid #999; border-top: 2px solid #777; border-left: 2px solid #777; background: #fff; }
.combo select { width: 100%; height: 100%; padding: 0 20px 0 2px; border: 0; background: none; appearance: none; }
.combo i { position: absolute; top: 0; right: 0; bottom: 0; width: 20px; background: #f0f0f0; border: 1px solid #ddd; border-right-color: #777; border-bottom-color: #777; display: grid; place-items: center; pointer-events: none; }
.combo i::before { content: ""; border: 5px solid transparent; border-top: 5px solid #000; border-bottom: 0; }
.sunk { width: 100%; height: 22px; padding: 0 2px; border: 1px solid #fff; border-top: 2px solid #777; border-left: 2px solid #777; background: #f0f0f0; }

.material { flex: none; height: 93px; display: flex; gap: 3px; align-items: flex-start; padding: 2px 1px 0 2px; border-bottom: 1px solid #999; }
.preview { flex: none; width: 77px; height: 87px; padding: 5px 1px; border: 1px solid #999; }
.preview svg { width: 74px; height: 75px; }
.material .sunk { flex: 1; min-width: 0; }
.pale { color: #777; }
.material-side { flex: none; width: 28px; display: flex; flex-direction: column; align-items: center; padding-top: 3px; }
.create { margin: 10px 0 5px; }
.create svg { width: 22px; height: 23px; }
.swap svg { width: 26px; height: 26px; }

.tabs { flex: none; height: 33px; display: flex; align-items: flex-end; padding: 7px 5px 3px 0; }
.tab { height: 21px; width: 47px; padding: 0 0 1px 5px; text-align: left; border: 1px solid #fff; border-right: 2px solid #777; border-bottom: 0; }
.tab.on { height: 23px; width: 51px; padding: 0 0 4px 7px; }
.dropper { align-self: flex-start; margin-left: auto; }
.dropper svg { width: 20px; height: 20px; }
.nav { flex: none; height: 33px; display: flex; align-items: center; padding: 0 5px 5px 9px; border-bottom: 1px solid #999; }
.nav.second { height: 36px; padding-bottom: 2px; }
.nav > button + button { margin-left: 11px; }
.nav > .combo { flex: 1; height: 26px; margin: 6px 9px 0 5px; }
.combo.big select { padding-left: 4px; }
.combo.lined::after { content: ""; position: absolute; left: 4px; right: 25px; bottom: 1px; height: 1px; background: #000; }
.i16 { width: 16px; height: 16px; }
.i18 { width: 18px; height: 18px; }
.i20 { width: 20px; height: 20px; }

.listing { display: flex; background: #fff; overflow: hidden; }
.colors { flex: 1; min-height: 0; }
.folders { flex: none; height: 82px; }
.grid { flex: 1; display: grid; grid-template-columns: repeat(3, 62px); grid-auto-rows: 62px; gap: 2px; padding: 2px 3px; }
.swatch { border: 1px solid #999; padding: 1px; background-clip: content-box; }
.c1 { background-color: #ffcccc; } .c2 { background-color: #ff9999; } .c3 { background-color: #ff6666; }
.c4 { background-color: #ff3333; } .c5 { background-color: #ff0000; } .c6 { background-color: #cc0000; }
.c7 { background-color: #990000; } .c8 { background-color: #660000; } .c9 { background-color: #ffd9cf; }
.c10 { background-color: #ffb39c; } .c11 { background-color: #ff8f68; } .c12 { background-color: #ff6833; }
.c13 { background-color: #ff4000; } .c14 { background-color: #cc3300; } .c15 { background-color: #992600; }
.c16 { background-color: #661a00; } .c17 { background-color: #ffe6d0; } .c18 { background-color: #ffcc99; }
.folder { display: flex; flex-direction: column; align-items: flex-start; padding: 11px 0 0 9px; border: 1px solid #999; }
.folder svg { flex: none; width: 40px; height: 36px; }
.folder span { margin: -5px 0 0 -9px; padding: 0 2px 0 3px; background: #fff; white-space: nowrap; }
.scroll { flex: none; width: 20px; display: flex; flex-direction: column; background: #f0f0f0; }
.scroll button { height: 21px; width: 100%; display: grid; place-items: center; }
.scroll svg { width: 10px; height: 8px; }
.scroll i { height: 21px; background: #cdcdcd; }
.scroll .end { margin-top: auto; }
.splitter { flex: none; height: 8px; margin-top: 3px; border-top: 2px solid #777; border-bottom: 1px solid #aaa; }
.second-head { flex: none; height: 21px; margin: 0; padding: 1px 5px; background: #e3e3e3; border-bottom: 1px solid #999; font-size: 12px; font-weight: 400; line-height: 16px; }

/* status bar */
.status { flex: none; height: 25px; display: flex; align-items: center; overflow: hidden; padding: 0 5px 0 7px; font-size: 17px; }
.status-icons { display: flex; gap: 17px; margin: 6px 12px 0 0; }
.status-icons svg { width: 18px; height: 20px; }
.bar { width: 1px; height: 16px; margin-top: 6px; background: #888; }
.status p, .measure label { margin: 6px 10px 0; }
.measure { margin-left: auto; display: flex; align-items: center; }
.measure input { width: 250px; height: 25px; padding: 6px 4px 0; border: 1px solid #a8b8d0; border-bottom: 0; background: #fff; font-size: 16px; }
```
